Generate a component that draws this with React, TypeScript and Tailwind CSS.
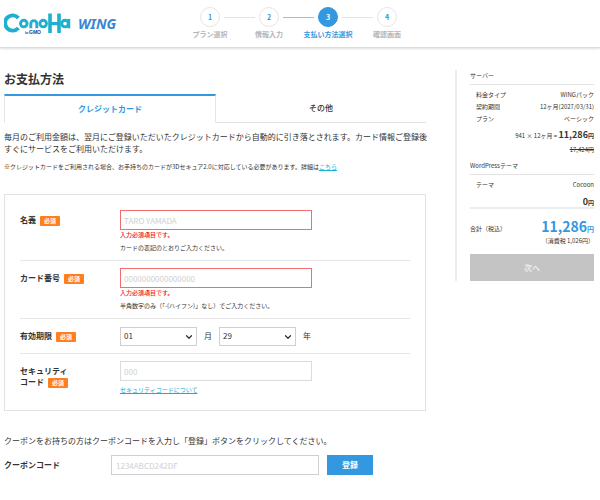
import type { ReactNode } from "react";
import { ChevronDown } from "lucide-react";

function Logo() {
  return (
    <a href="#" aria-label="ConoHa WING" className="flex items-center gap-[7px] pl-1">
      <svg viewBox="0 0 67 21" className="h-[21px] w-[67px]" fill="none" stroke="#1fb0cf" strokeWidth="3.9">
        <path d="M14.4 5A7.6 7.6 0 1 0 14.4 15" />
        <circle cx="19.8" cy="10.6" r="3.3" strokeWidth="2.9" />
        <path d="M26.8 15.2V10.6a3 3 0 0 1 6 0v4.6" strokeWidth="2.9" />
        <circle cx="39.2" cy="10.6" r="3.3" strokeWidth="2.9" />
        <path d="M46 0.5V20M55 0.5V20" strokeWidth="3.6" />
        <path d="M46 10.6H55" strokeWidth="3.2" />
        <circle cx="61" cy="10.6" r="3.3" strokeWidth="2.9" />
        <path d="M64.8 5.9V15.3" strokeWidth="2.9" />
        <text x="21" y="20.6" fontSize="3" fontFamily="Liberation Sans" fontWeight="700" fill="#23408f" stroke="none">
          by
        </text>
        <text x="25" y="20.6" fontSize="5" fontFamily="Liberation Sans" fontWeight="700" fill="#23408f" stroke="none">
          GMO
        </text>
      </svg>
      <span className="font-['Noto_Sans','Open_Sans',sans-serif] text-[14px] leading-5 font-bold text-[#3a86d4] italic">
        WING
      </span>
    </a>
  );
}

const steps = ["プラン選択", "情報入力", "支払い方法選択", "確認画面"];
const current = 2;

function Steps() {
  return (
    <ol className="flex">
      {steps.map((name, i) => (
        <li key={name} className="relative flex w-[59px] flex-col items-center gap-[2px]">
          {i > 0 && (
            <span
              className={`absolute top-[10px] right-[44px] h-px w-[31px] ${i === current ? "bg-[#8cc4ee]" : "bg-[#e3e3e3]"}`}
            />
          )}
          <span
            className={`flex size-5 items-center justify-center rounded-full border text-[7px] leading-none font-bold ${
              i === current ? "border-[#3498e0] bg-[#3498e0] text-white" : "border-[#e6e6e6] bg-white text-[#3498e0]"
            }`}
          >
            {i + 1}
          </span>
          <span
            className={`text-[7px] leading-[10px] font-bold whitespace-nowrap ${i === current ? "text-[#3498e0]" : "text-[#b5b5b5]"}`}
          >
            {name}
          </span>
        </li>
      ))}
    </ol>
  );
}

function Row({ id, label, children }: { id: string; label: ReactNode; children: ReactNode }) {
  return (
    <div className="flex border-b border-[#e6e6e6] py-[7px] last:border-b-0">
      <label htmlFor={id} className="w-[100px] shrink-0 pt-1 text-[8px] leading-[11px] font-bold">
        {label}
        <span className="ml-1 inline-block rounded-[1px] bg-[#ff7f1e] px-1 text-[6px] leading-[10px] text-white">
          必須
        </span>
      </label>
      <div className="min-w-0 flex-1">{children}</div>
    </div>
  );
}

function TextBox({ id, placeholder, invalid }: { id: string; placeholder: string; invalid?: boolean }) {
  return (
    <>
      <input
        id={id}
        type="text"
        placeholder={placeholder}
        aria-invalid={invalid}
        className={`block h-5 w-full max-w-[192px] border bg-white px-[3px] text-[8px] leading-3 outline-none placeholder:text-[#cfcfcf] ${
          invalid ? "border-[#f26d6d]" : "border-[#dcdcdc]"
        }`}
      />
      {invalid && <p className="text-[6px] leading-[10px] font-medium text-[#f01414]">入力必須項目です。</p>}
    </>
  );
}

function Choice({ id, label, values }: { id: string; label: string; values: string[] }) {
  return (
    <>
      <span className="relative block">
        <select
          id={id}
          aria-label={label}
          className="block h-[19px] w-[77px] appearance-none border border-[#d0d0d0] bg-white px-[3px] text-[8px] leading-3 outline-none"
        >
          {values.map((v) => (
            <option key={v}>{v}</option>
          ))}
        </select>
        <ChevronDown className="pointer-events-none absolute top-[5px] right-[3px] size-[10px]" strokeWidth={3} />
      </span>
      <span className="w-[22px] text-center text-[8px]">{label}</span>
    </>
  );
}

function Summary() {
  const items = [
    ["料金タイプ", "WINGパック"],
    ["契約期間", "12ヶ月(2027/03/31)"],
    ["プラン", "ベーシック"],
  ];
  return (
    <aside className="h-[211px] w-[139px] shrink-0 border-l-2 border-[#ececec] pl-[13px] text-[6px] leading-3">
      <h2 className="border-b border-[#e2e2e2] pb-[2px]">サーバー</h2>
      <dl className="pt-1 pl-[6px]">
        {items.map(([k, v]) => (
          <div key={k} className="flex justify-between">
            <dt>{k}</dt>
            <dd>{v}</dd>
          </div>
        ))}
      </dl>
      <p className="mt-[2px] text-right leading-4">
        941 × 12ヶ月 = <b className="text-[9px]">11,286</b>
        <b>円</b>
      </p>
      <p className="text-right leading-3 line-through">17,424円</p>
      <h2 className="mt-1 border-b border-[#e2e2e2] pb-[2px]">WordPressテーマ</h2>
      <dl className="pt-1 pl-[6px]">
        <div className="flex justify-between">
          <dt>テーマ</dt>
          <dd>Cocoon</dd>
        </div>
      </dl>
      <p className="mt-[6px] h-3 border-b-2 border-[#ececec] text-right leading-[9px] font-bold">
        <span className="text-[9px]">0</span>円
      </p>
      <div className="mt-2 flex items-center justify-between">
        <span className="pt-1">合計（税込）</span>
        <span className="font-bold text-[#3498e0]">
          <span className="text-[14px] leading-[18px]">11,286</span>
          <span className="text-[7px]">円</span>
        </span>
      </div>
      <p className="text-right leading-[10px]">（消費税 1,026円）</p>
      <button
        type="button"
        disabled
        className="mt-2 block h-[27px] w-full bg-[#c4c4c4] text-[8px] font-bold text-[#ececec]"
      >
        次へ
      </button>
    </aside>
  );
}

export default function App() {
  return (
    <div className="min-h-screen bg-white font-['Noto_Sans_CJK_JP',sans-serif] text-[#333]">
      <header className="grid h-12 grid-cols-[1fr_auto_1fr] border-b border-[#dcdcdc] pr-[3px] shadow-[0_1px_2px_rgba(0,0,0,0.12)]">
        <Logo />
        <div className="pt-[7px]">
          <Steps />
        </div>
      </header>

      <div className="flex gap-[29px] pt-[22px] pr-[6px] pl-1">
        <main className="min-w-0 flex-1 text-[8px]">
          <h1 className="text-[12px] leading-[18px] font-bold">お支払方法</h1>

          <div role="tablist" className="mt-[6px] flex h-[29px]">
            <button
              type="button"
              role="tab"
              aria-selected="true"
              className="flex-1 border-x border-t-2 border-x-[#e6e6e6] border-t-[#3498e0] pb-[2px] text-[8px] font-bold text-[#3498e0]"
            >
              クレジットカード
            </button>
            <button type="button" role="tab" aria-selected="false" className="flex-1 border-b border-[#e2e2e2] text-[8px] font-medium">
              その他
            </button>
          </div>

          <p className="mt-2 -mr-1 leading-3">
            毎月のご利用金額は、翌月にご登録いただいたクレジットカードから自動的に引き落とされます。カード情報ご登録後すぐにサービスをご利用いただけます。
          </p>
          <p className="mt-[6px] text-[6px] leading-3">
            ※クレジットカードをご利用される場合、お手持ちのカードが3Dセキュア2.0に対応している必要があります。詳細は
            <a href="#" className="text-[#14b0d4] underline">
              こちら
            </a>
          </p>

          <form className="mt-[21px] border border-[#e2e2e2] px-[15px] pt-2 pb-2">
            <Row id="holder" label="名義">
              <TextBox id="holder" placeholder="TARO YAMADA" invalid />
              <p className="mt-[3px] text-[6px] leading-[10px]">カードの表記のとおりご入力ください。</p>
            </Row>
            <Row id="number" label="カード番号">
              <TextBox id="number" placeholder="0000000000000000" invalid />
              <p className="mt-[3px] text-[6px] leading-[10px]">半角数字のみ（「-(ハイフン)」なし）でご入力ください。</p>
            </Row>
            <Row id="month" label="有効期限">
              <div className="flex h-5 items-center">
                <Choice id="month" label="月" values={["01", "02", "03", "04", "05", "06"]} />
                <Choice id="year" label="年" values={["29", "30", "31", "32"]} />
              </div>
            </Row>
            <Row
              id="code"
              label={
                <>
                  セキュリティ
                  <br />
                  コード
                </>
              }
            >
              <TextBox id="code" placeholder="000" />
              <a href="#" className="mt-1 block text-[6px] leading-[10px] text-[#14b0d4] underline">
                セキュリティコードについて
              </a>
            </Row>
          </form>

          <p className="mt-6 leading-3">
            クーポンをお持ちの方はクーポンコードを入力し「登録」ボタンをクリックしてください。
          </p>
          <div className="mt-2 flex items-center">
            <label htmlFor="coupon" className="w-[107px] font-bold">
              クーポンコード
            </label>
            <input
              id="coupon"
              type="text"
              placeholder="1234ABCD242DF"
              className="h-5 w-[208px] border border-[#d0d0d0] px-1 text-[8px] leading-3 outline-none placeholder:text-[#cfcfcf]"
            />
            <button type="button" className="ml-2 h-5 w-[46px] bg-[#3498e0] text-[8px] font-bold text-white">
              登録
            </button>
          </div>
        </main>
        <Summary />
      </div>
    </div>
  );
}
